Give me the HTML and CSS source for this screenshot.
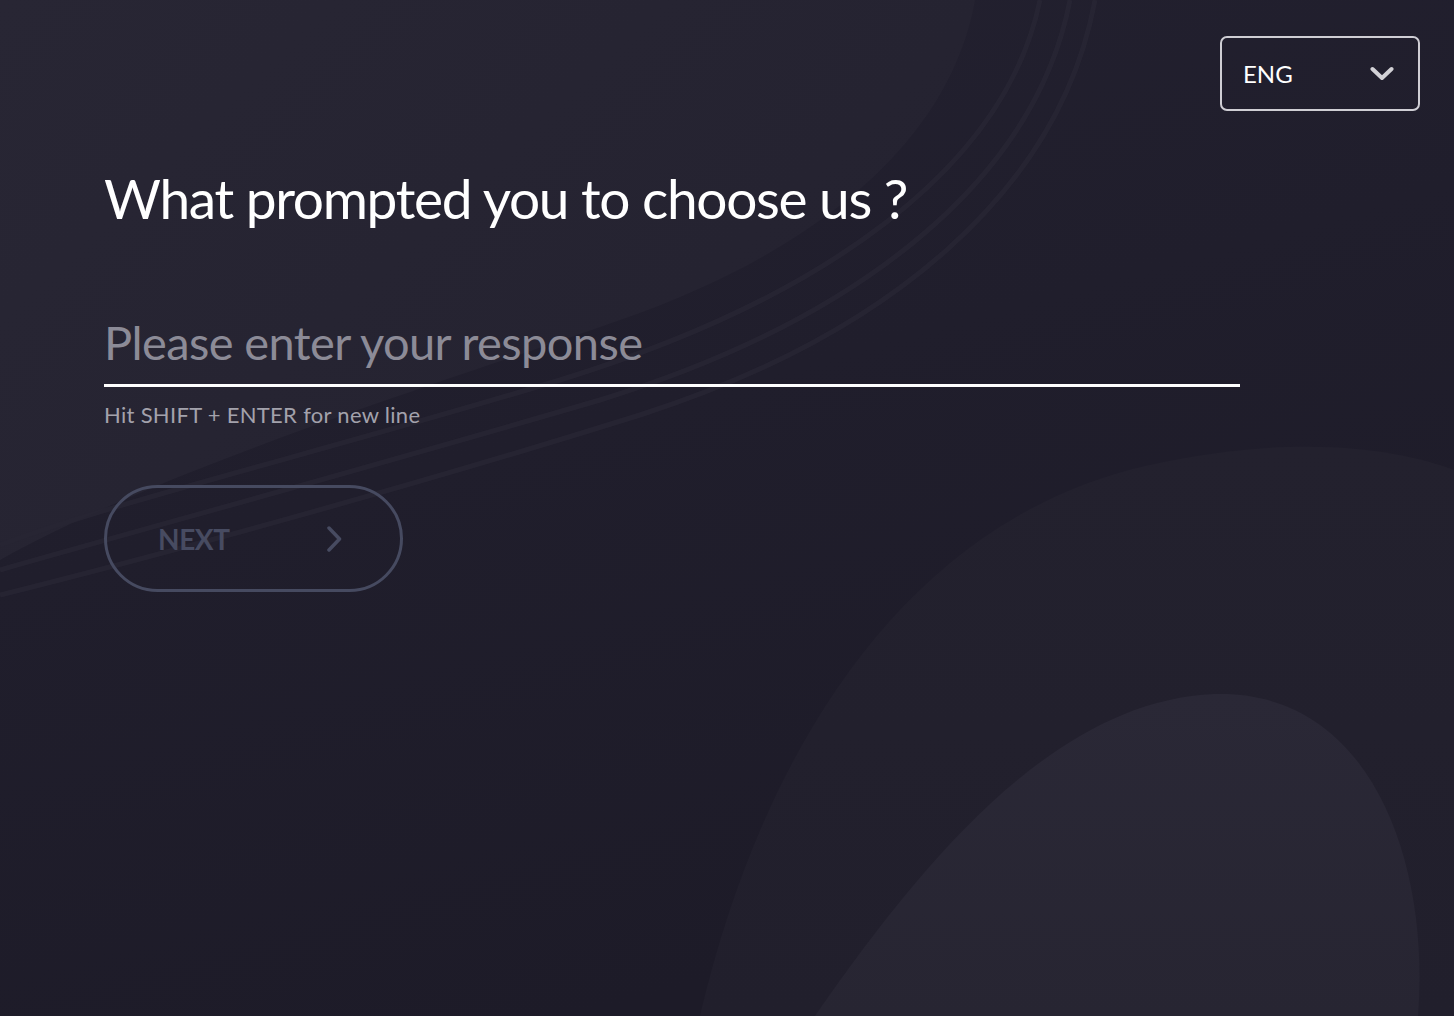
FILE: index.html
```html
<!DOCTYPE html>
<html lang="en">
<head>
<meta charset="utf-8">
<title>What prompted you to choose us ?</title>
<link rel="stylesheet" href="styles.css">
</head>
<body>
<div class="page">
  <svg class="bg" width="1454" height="1016" viewBox="0 0 1454 1016" aria-hidden="true">
    <defs>
      <linearGradient id="gBase" x1="0" y1="0" x2="0.4" y2="1">
        <stop offset="0" stop-color="#232130"/>
        <stop offset="1" stop-color="#1d1b28"/>
      </linearGradient>
      <linearGradient id="gTop" x1="0" y1="0" x2="1" y2="0.6">
        <stop offset="0" stop-color="#282634"/>
        <stop offset="1" stop-color="#242230"/>
      </linearGradient>
      <linearGradient id="gBlob" x1="0" y1="0" x2="0" y2="1">
        <stop offset="0" stop-color="#23212e"/>
        <stop offset="1" stop-color="#211f2c"/>
      </linearGradient>
      <linearGradient id="gInner" x1="0" y1="0" x2="0" y2="1">
        <stop offset="0" stop-color="#2a2836"/>
        <stop offset="1" stop-color="#272532"/>
      </linearGradient>
    </defs>
    <rect width="1454" height="1016" fill="url(#gBase)"/>
    <path d="M0 0 L975 0 C 950 140 820 250 620 320 C 420 390 160 470 0 560 Z" fill="url(#gTop)"/>
    <g fill="none" stroke="#282634" stroke-width="5" opacity="0.85">
      <path d="M1040 0 C 1005 170 820 300 560 380 C 330 450 120 500 0 545"/>
      <path d="M1070 0 C 1035 180 860 320 600 400 C 360 470 140 530 0 570"/>
      <path d="M1095 0 C 1060 190 890 335 640 415 C 400 490 160 555 0 595"/>
    </g>
    <path d="M700 1016 C 760 760 900 520 1150 465 C 1300 432 1400 450 1454 470 L1454 1016 Z" fill="url(#gBlob)"/>
    <path d="M815 1016 C 930 850 1060 700 1215 694 C 1370 690 1430 860 1418 1016 Z" fill="url(#gInner)"/>
  </svg>

  <header class="topbar">
    <button class="lang" type="button">
      <span class="lang-label">ENG</span>
      <svg class="lang-chev" width="24" height="16" viewBox="0 0 24 16" aria-hidden="true">
        <path d="M2.5 3 L12 12 L21.5 3" fill="none" stroke="#d2d1d6" stroke-width="4" stroke-linecap="round" stroke-linejoin="round"/>
      </svg>
    </button>
  </header>

  <main class="form">
    <h1 class="question">What prompted you to choose us ?</h1>
    <textarea class="answer" rows="1" placeholder="Please enter your response"></textarea>
    <p class="hint">Hit SHIFT + ENTER for new line</p>
    <button class="next" type="button">
      <span class="next-label">NEXT</span>
      <svg class="next-chev" width="18" height="26" viewBox="0 0 18 26" aria-hidden="true">
        <path d="M3 2 L13.5 13 L3 24" fill="none" stroke="#474b61" stroke-width="3.5" stroke-linecap="round" stroke-linejoin="round"/>
      </svg>
    </button>
  </main>
</div>
</body>
</html>
```

FILE: styles.css
```css
* { box-sizing: border-box; }

html, body {
  margin: 0;
  padding: 0;
  background: #201e2b;
}

body {
  font-family: Lato, "Noto Sans", "Liberation Sans", sans-serif;
  color: #ffffff;
}

.page {
  position: relative;
  width: 1454px;
  height: 1016px;
  overflow: hidden;
}

.bg {
  position: absolute;
  left: 0;
  top: 0;
  z-index: 0;
}

.topbar {
  position: relative;
  z-index: 1;
  display: flex;
  justify-content: flex-end;
  padding: 36px 34px 0 0;
}

.lang {
  width: 200px;
  height: 75px;
  display: flex;
  align-items: center;
  justify-content: space-between;
  padding: 0 24px 0 21px;
  background: transparent;
  border: 2px solid #cfced4;
  border-radius: 7px;
  color: #ffffff;
  font-family: inherit;
  font-size: 24px;
  cursor: pointer;
}

.lang-chev { display: block; }

.form {
  position: relative;
  z-index: 1;
  padding: 52px 0 0 104px;
  display: flex;
  flex-direction: column;
  align-items: flex-start;
}

.question {
  margin: 0;
  font-size: 55px;
  font-weight: 400;
  line-height: 70px;
  letter-spacing: -1.3px;
  color: #ffffff;
}

.answer {
  margin-top: 81px;
  width: 1136px;
  height: 73px;
  padding: 0 0 14px 0;
  background: transparent;
  border: 0;
  border-bottom: 3px solid #ffffff;
  resize: none;
  overflow: hidden;
  outline: none;
  font-family: inherit;
  font-size: 47px;
  line-height: 56px;
  letter-spacing: -0.6px;
  color: #ffffff;
}

.answer::placeholder {
  color: #8c8b97;
  opacity: 1;
}

.hint {
  margin: 15px 0 0 0;
  font-size: 22px;
  line-height: 26px;
  letter-spacing: 0.3px;
  color: #a3a2ac;
}

.next {
  margin-top: 57px;
  width: 299px;
  height: 107px;
  display: flex;
  align-items: center;
  justify-content: space-between;
  padding: 0 56px 0 51px;
  background: transparent;
  border: 3px solid #464a60;
  border-radius: 54px;
  font-family: inherit;
  font-size: 28px;
  font-weight: 700;
  letter-spacing: -0.4px;
  color: #474b61;
  cursor: pointer;
}

.next-label { line-height: 1; }

.next-chev { display: block; }
```
